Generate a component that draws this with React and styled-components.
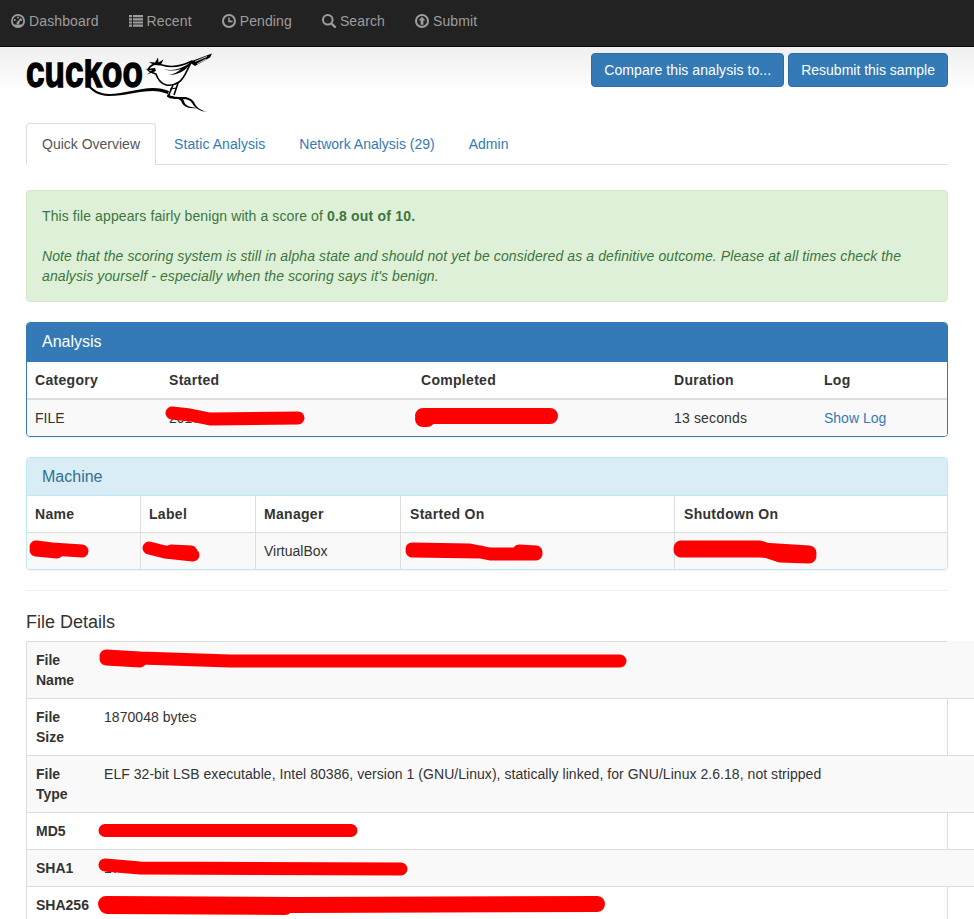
import React from "react";
import styled, { createGlobalStyle } from "styled-components";

const GlobalStyle = createGlobalStyle`
  html, body {
    margin: 0;
    padding: 0;
    background: #fff;
  }
  body {
    font-family: "Liberation Sans", Arial, sans-serif;
    font-size: 14px;
    line-height: 20px;
    color: #333;
  }
  * {
    box-sizing: border-box;
  }
`;

const Page = styled.div`
  height: 100vh;
  overflow: hidden;
`;

const Navbar = styled.nav`
  display: flex;
  height: 47px;
  padding: 0 0 4px 11px;
  background: #222;
  border-bottom: 1px solid #080808;
`;

const NavLink = styled.a`
  display: flex;
  align-items: center;
  gap: 4px;
  margin-right: 30px;
  color: #9d9d9d;
  letter-spacing: 0.12px;
  text-decoration: none;
`;

const NavIcon = styled.svg`
  width: 14px;
  height: 14px;
  flex: none;
  fill: #9d9d9d;
`;

const Main = styled.main`
  padding: 0 26px;
  background: linear-gradient(to bottom, #efefef, #fff) no-repeat top / 100% 46px;
`;

const Header = styled.header`
  display: flex;
  justify-content: space-between;
  height: 76px;
  padding-top: 6px;
`;

const LogoMark = styled.svg`
  display: block;
  width: 190px;
  height: 65px;
  margin-top: -3px;
`;

const ButtonRow = styled.div`
  display: flex;
  gap: 4px;
  align-items: flex-start;
`;

const Button = styled.a`
  padding: 6px 12px;
  height: 34px;
  color: #fff;
  background: #337ab7;
  border: 1px solid #2e6da4;
  border-radius: 4px;
  white-space: nowrap;
  letter-spacing: ${(p) => p.$track || 0}px;
`;

const Tabs = styled.ul`
  display: flex;
  gap: 2px;
  margin: 0 0 25px;
  padding: 0;
  list-style: none;
  border-bottom: 1px solid #ddd;
`;

const Tab = styled.li`
  margin-bottom: -1px;
  padding: 10px 15px;
  border: 1px solid ${(p) => (p.$active ? "#ddd" : "transparent")};
  border-bottom-color: ${(p) => (p.$active ? "#fff" : "transparent")};
  border-radius: 4px 4px 0 0;
  background: ${(p) => (p.$active ? "#fff" : "transparent")};
  color: ${(p) => (p.$active ? "#555" : "#337ab7")};
  letter-spacing: ${(p) => p.$track || 0}px;
`;

const Alert = styled.div`
  margin-bottom: 20px;
  padding: 15px;
  color: #3c763d;
  background: #dff0d8;
  border: 1px solid #d6e9c6;
  border-radius: 4px;
  letter-spacing: 0.1px;
  b {
    letter-spacing: 0.2px;
  }
`;

const Panel = styled.section`
  margin-bottom: 20px;
  border: 1px solid ${(p) => p.$border};
  border-radius: 4px;
  overflow: hidden;
  box-shadow: 0 1px 1px rgba(0, 0, 0, 0.05);
`;

const PanelHeading = styled.div`
  height: ${(p) => p.$h}px;
  padding: 0 15px;
  font-size: 16px;
  line-height: 37px;
  color: ${(p) => p.$color};
  background: ${(p) => p.$bg};
  border-bottom: 1px solid ${(p) => p.$border};
`;

const DataTable = styled.table`
  width: 100%;
  table-layout: fixed;
  border-collapse: separate;
  border-spacing: 0;
`;

const HeadCell = styled.th`
  position: relative;
  width: ${(p) => p.$w}px;
  padding: 8px;
  padding-left: ${(p) => p.$inset || 8}px;
  text-align: left;
  font-weight: bold;
  letter-spacing: 0.3px;
  border-bottom: ${(p) => (p.$grid ? "1px" : "2px")} solid #ddd;
  border-right: ${(p) => (p.$grid ? "1px solid #ddd" : "none")};
  &:last-child {
    border-right: none;
  }
`;

const BodyCell = styled.td`
  position: relative;
  padding: 8px;
  background: #f9f9f9;
  border-right: ${(p) => (p.$grid ? "1px solid #ddd" : "none")};
  white-space: nowrap;
  letter-spacing: ${(p) => p.$track || 0}px;
  &:last-child {
    border-right: none;
  }
`;

const TextLink = styled.a`
  color: #337ab7;
`;

const Rule = styled.hr`
  height: 1px;
  margin: 20px 0;
  border: none;
  background: #eee;
`;

const SectionTitle = styled.h4`
  margin: 0 0 9px;
  padding-top: 1px;
  font-size: 18px;
  font-weight: 500;
  line-height: 20px;
`;

const DetailTable = styled.table`
  width: 1000px;
  table-layout: fixed;
  border-collapse: separate;
  border-spacing: 0;
  border-left: 1px solid #ddd;
`;

const DetailRow = styled.tr`
  background: ${(p) => (p.$odd ? "#f9f9f9" : "#fff")};
`;

const DetailHead = styled.th`
  position: relative;
  width: 68px;
  padding: 8px 8px 8px 9px;
  text-align: left;
  vertical-align: top;
  font-weight: bold;
  border-top: 1px solid #ddd;
`;

const DetailCell = styled.td`
  position: relative;
  width: 852px;
  padding: 8px 8px 8px 9px;
  vertical-align: top;
  letter-spacing: 0.045px;
  border-top: 1px solid #ddd;
`;

const DetailSpare = styled.td`
  border-top: 1px solid ${(p) => (p.$first ? "#f9f9f9" : "#ddd")};
  border-left: ${(p) => (p.$odd ? "none" : "1px solid #ddd")};
`;

const ScribbleSvg = styled.svg`
  position: absolute;
  top: 0;
  left: 0;
  width: 100%;
  height: 100%;
  overflow: visible;
  fill: none;
  stroke: #f00;
  stroke-linecap: round;
  stroke-linejoin: round;
`;

// red marker strokes over the hidden values, coordinates are local to the cell
const Scribble = ({ d, size = 13 }) => (
  <ScribbleSvg aria-hidden="true">
    <path d={d} strokeWidth={size} />
  </ScribbleSvg>
);

const DashboardIcon = () => (
  <NavIcon viewBox="0 0 14 14">
    <path fillRule="evenodd" d="M7 0a7 7 0 1 0 0 14A7 7 0 0 0 7 0zm0 1.8a5.2 5.2 0 0 1 5.2 5.2c0 1.3-.5 2.5-1.3 3.4H3.1A5.2 5.2 0 0 1 7 1.8z" />
    <circle cx="7" cy="3.6" r="1" />
    <circle cx="3.8" cy="6" r="1" />
    <circle cx="10.2" cy="6" r="1" />
    <path d="M9.7 3.9l.9.6L8.3 8.6a1.4 1.4 0 1 1-1.6-1z" />
  </NavIcon>
);

const ListIcon = () => (
  <NavIcon viewBox="0 0 14 14">
    <path d="M0 1h3v2.2H0zM4 1h10v2.2H4zM0 4.2h3v2.2H0zM4 4.2h10v2.2H4zM0 7.4h3v2.2H0zM4 7.4h10v2.2H4zM0 10.6h3v2.2H0zM4 10.6h10v2.2H4z" />
  </NavIcon>
);

const ClockIcon = () => (
  <NavIcon viewBox="0 0 14 14">
    <path fillRule="evenodd" d="M7 0a7 7 0 1 0 0 14A7 7 0 0 0 7 0zm0 2a5 5 0 1 1 0 10A5 5 0 0 1 7 2z" />
    <path d="M6.2 3.4h1.6v3.2h2.8v1.6H6.2z" />
  </NavIcon>
);

const SearchIcon = () => (
  <NavIcon viewBox="0 0 14 14">
    <path fillRule="evenodd" d="M5.8 0a5.8 5.8 0 1 0 0 11.6A5.8 5.8 0 0 0 5.8 0zm0 2a3.8 3.8 0 1 1 0 7.6 3.8 3.8 0 0 1 0-7.6z" />
    <path d="M8.9 10.5l1.6-1.6 3.2 3.2a1.1 1.1 0 0 1-1.6 1.6z" />
  </NavIcon>
);

const UploadIcon = () => (
  <NavIcon viewBox="0 0 14 14">
    <path fillRule="evenodd" d="M7 0a7 7 0 1 0 0 14A7 7 0 0 0 7 0zm0 2a5 5 0 1 1 0 10A5 5 0 0 1 7 2z" />
    <path d="M7 2.8l3.4 3.7H8.4v4.2H5.6V6.5H3.6z" />
  </NavIcon>
);

const Logo = () => (
  <LogoMark viewBox="0 0 190 65">
    <defs>
      <clipPath id="logo-word">
        <rect x="0" y="9" width="125" height="36" />
      </clipPath>
    </defs>
    <g clipPath="url(#logo-word)">
      <text
        transform="translate(0 37) scale(0.742 1)"
        fontFamily='"Liberation Sans", Arial, sans-serif'
        fontWeight="bold"
        fontSize="45"
        fill="#000"
        stroke="#000"
        strokeWidth="1.4"
      >
        cuckoo
      </text>
    </g>
    {/* swoosh under the word, running into the branch */}
    <path d="M62 33c5 7 12 11 21 11 15 0 30-6 44-6 6 0 11 1 16 3l-1 3c-6-2-10-3-15-3-14 0-29 5-44 5-11 0-18-5-23-12z" fill="#000" />
    <path d="M142 44c3 3 9 3 15 3 5 0 9 2 11 5 2 5 6 8 13 10-8-1-12-4-15-9-2-3-5-4-9-4l1 2c1 4 4 6 13 7-10 1-14-2-16-7-1-1-2-2-3-2-5 0-9 0-11-3z" fill="#000" />
    {/* bird */}
    <path d="M122 20c2-5 8-8 14-5 9 3 20 1 30-4-5 8-7 17-13 21-9 6-19 4-23-8-3-1-6-2-8-4z" fill="#fff" stroke="#000" strokeWidth="1.6" strokeLinejoin="round" />
    <path d="M163 12l23-8.500-2 4-15 8.500z" fill="#000" />
    <path d="M169 11.500l12-5M171 14l9-5" stroke="#fff" strokeWidth="0.8" />
    <path d="M138 19c9 3 19-1 27-7-3 6-7 9-12 11-3 1-6 2-10 2 5-1 9-3 12-6-6 2-12 2-17 0z" fill="#000" />
    <path d="M128 15l-5-3 6 .5 3-5 .5 5 5-3-3 6z" fill="#000" />
    <path d="M129 18l-10 1 7 1.500-5 4 9-3.500z" fill="#000" />
    <circle cx="131" cy="18" r="1" fill="#fff" />
    <path d="M147 35l-5 12M152 33l-4 12" stroke="#000" strokeWidth="1.600" fill="none" />
    <path d="M144 39l7-1M141 46l7 1" stroke="#000" strokeWidth="1.200" fill="none" />
  </LogoMark>
);

const analysisCols = [
  { label: "Category", w: 134 },
  { label: "Started", w: 252 },
  { label: "Completed", w: 253 },
  { label: "Duration", w: 150 },
  { label: "Log", w: 131 },
];

const machineCols = [
  { label: "Name", w: 114 },
  { label: "Label", w: 115 },
  { label: "Manager", w: 145 },
  { label: "Started On", w: 274, inset: 9 },
  { label: "Shutdown On", w: 272, inset: 9 },
];

const details = [
  { label: "File Name", scribble: "M11 14L45 16L135 19L525 19M11 17L45 19", hidden: "1764" },
  { label: "File Size", text: "1870048 bytes" },
  {
    label: "File Type",
    text: "ELF 32-bit LSB executable, Intel 80386, version 1 (GNU/Linux), statically linked, for GNU/Linux 2.6.18, not stripped",
  },
  { label: "MD5", scribble: "M10 17.5L256 17.5" },
  { label: "SHA1", scribble: "M10 15L45 18L306 19", hidden: "1764" },
  { label: "SHA256", scribble: "M11 17L200 18L502 17M12 19L190 20", size: 16 },
];

export default function App() {
  return (
    <Page>
      <GlobalStyle />
      <Navbar>
        <NavLink><DashboardIcon />Dashboard</NavLink>
        <NavLink><ListIcon />Recent</NavLink>
        <NavLink><ClockIcon />Pending</NavLink>
        <NavLink><SearchIcon />Search</NavLink>
        <NavLink><UploadIcon />Submit</NavLink>
      </Navbar>
      <Main>
        <Header>
          <Logo />
          <ButtonRow>
            <Button $track={0.07}>Compare this analysis to...</Button>
            <Button>Resubmit this sample</Button>
          </ButtonRow>
        </Header>
        <Tabs>
          <Tab $active>Quick Overview</Tab>
          <Tab $track={0.07}>Static Analysis</Tab>
          <Tab>Network Analysis (29)</Tab>
          <Tab>Admin</Tab>
        </Tabs>
        <Alert>
          This file appears fairly benign with a score of <b>0.8 out of 10.</b>
          <br />
          <br />
          <i>
            Note that the scoring system is still in alpha state and should not yet be considered as a
            definitive outcome. Please at all times check the analysis yourself - especially when the
            scoring says it's benign.
          </i>
        </Alert>

        <Panel $border="#337ab7">
          <PanelHeading $h={39} $color="#fff" $bg="#337ab7" $border="#337ab7">Analysis</PanelHeading>
          <DataTable>
            <thead>
              <tr>
                {analysisCols.map((c) => (
                  <HeadCell key={c.label} $w={c.w}>{c.label}</HeadCell>
                ))}
              </tr>
            </thead>
            <tbody>
              <tr>
                <BodyCell>FILE</BodyCell>
                <BodyCell>
                  2017
                  <Scribble d="M11 13L29 15L49 19L137 18" />
                </BodyCell>
                <BodyCell>
                  <Scribble d="M10 19L14 19M10 16L137 16" size={16} />
                </BodyCell>
                <BodyCell $track={0.15}>13 seconds</BodyCell>
                <BodyCell><TextLink>Show Log</TextLink></BodyCell>
              </tr>
            </tbody>
          </DataTable>
        </Panel>

        <Panel $border="#bce8f1">
          <PanelHeading $h={38} $color="#31708f" $bg="#d9edf7" $border="#bce8f1">Machine</PanelHeading>
          <DataTable>
            <thead>
              <tr>
                {machineCols.map((c) => (
                  <HeadCell key={c.label} $w={c.w} $inset={c.inset} $grid>{c.label}</HeadCell>
                ))}
              </tr>
            </thead>
            <tbody>
              <tr>
                <BodyCell $grid><Scribble d="M9 14L25 16L55 18M9 17L30 19" /></BodyCell>
                <BodyCell $grid><Scribble d="M8 15L24 19L52 22M30 18L50 19" /></BodyCell>
                <BodyCell $grid>VirtualBox</BodyCell>
                <BodyCell $grid><Scribble d="M11 16L69 17L89 21L135 21M11 18L80 19M118 18L135 19" /></BodyCell>
                <BodyCell><Scribble d="M6 15L85 15L105 22L134 23M6 17L85 17L134 20" size={15} /></BodyCell>
              </tr>
            </tbody>
          </DataTable>
        </Panel>

        <Rule />
        <SectionTitle>File Details</SectionTitle>
        <DetailTable>
          <tbody>
            {details.map((row, i) => (
              <DetailRow key={row.label} $odd={i % 2 === 0}>
                <DetailHead>{row.label}</DetailHead>
                <DetailCell>
                  {row.text || row.hidden || "\u00a0"}
                  {row.scribble && <Scribble d={row.scribble} size={row.size} />}
                </DetailCell>
                <DetailSpare $odd={i % 2 === 0} $first={i === 0} />
              </DetailRow>
            ))}
          </tbody>
        </DetailTable>
      </Main>
    </Page>
  );
}
